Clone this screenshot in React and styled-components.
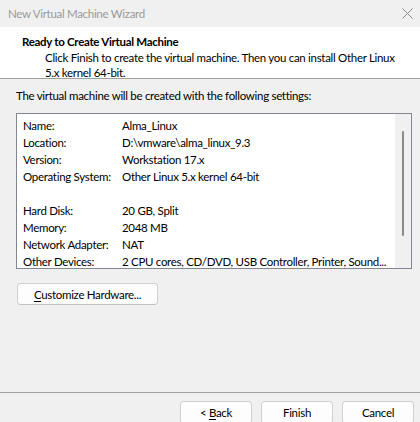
import styled, { createGlobalStyle } from 'styled-components';

const GlobalStyle = createGlobalStyle`
  html, body {
    margin: 0;
    padding: 0;
    background: #f0f0f0;
  }

  body {
    font-family: Lato, "Liberation Sans", sans-serif;
    font-size: 11.5px;
    letter-spacing: -0.3px;
    color: #000;
  }
`;

const Window = styled.div`
  width: 420px;
  height: 422px;
  display: flex;
  flex-direction: column;
  background: #f0f0f0;
  overflow: hidden;
`;

const TitleBar = styled.div`
  height: 27px;
  flex-shrink: 0;
  display: flex;
  align-items: center;
  justify-content: space-between;
  padding: 0 7px 0 8px;
  color: #9a9a9a;
`;

const Header = styled.div`
  height: 52px;
  flex-shrink: 0;
  background: #fff;
  border-bottom: 1px solid #a0a0a0;
  padding: 6px 0 0 22px;
  box-sizing: border-box;
  white-space: nowrap;

  h1 {
    margin: 0;
    font-size: 11.5px;
    font-weight: 700;
    line-height: 17px;
  }

  p {
    margin: 0 0 0 23px;
    line-height: 15px;
  }
`;

const Body = styled.div`
  flex: 1;
  display: flex;
  flex-direction: column;
  padding: 8px 8px 0 16px;
`;

const Intro = styled.div`
  line-height: 17px;
`;

const SettingsBox = styled.div`
  margin-top: 9px;
  width: 396px;
  height: 156px;
  box-sizing: border-box;
  border: 1px solid #828790;
  background: #fff;
  display: grid;
  grid-template-columns: 1fr 16px;
`;

const Rows = styled.div`
  padding: 3px 0 0 6px;
  overflow: hidden;
`;

const Row = styled.div`
  display: grid;
  grid-template-columns: 99px 1fr;
  height: 17px;
  line-height: 17px;
  white-space: nowrap;
`;

const ScrollTrack = styled.div`
  background: #f0f0f0;
  display: flex;
  justify-content: center;
  padding-top: 17px;
`;

const ScrollThumb = styled.div`
  width: 2px;
  height: 105px;
  background: #8a8a8a;
  border-radius: 1px;
`;

const Button = styled.button`
  flex-shrink: 0;
  height: ${({ $height }) => $height || 22}px;
  width: ${({ $width }) => $width || 72}px;
  padding: 0;
  box-sizing: border-box;
  border: 1px solid #d0d0d0;
  border-bottom-color: #c2c2c2;
  border-radius: 4px;
  background: #fdfdfd;
  font-family: inherit;
  font-size: 11.5px;
  letter-spacing: -0.3px;
  color: #000;

  u {
    text-decoration-thickness: 1px;
    text-underline-offset: 2px;
  }
`;

const CustomizeRow = styled.div`
  margin-top: 14px;
  padding-left: 1px;
`;

const Footer = styled.div`
  margin-top: auto;
  flex-shrink: 0;
  box-sizing: border-box;
  height: 30px;
  border-top: 1px solid #a0a0a0;
  display: flex;
  align-items: flex-start;
  justify-content: flex-end;
  gap: 9px;
  padding: 8px 6px 0 0;
  overflow: hidden;
`;

const settings = [
  ['Name:', 'Alma_Linux'],
  ['Location:', 'D:\\vmware\\alma_linux_9.3'],
  ['Version:', 'Workstation 17.x'],
  ['Operating System:', 'Other Linux 5.x kernel 64-bit'],
  ['', ''],
  ['Hard Disk:', '20 GB, Split'],
  ['Memory:', '2048 MB'],
  ['Network Adapter:', 'NAT'],
  ['Other Devices:', '2 CPU cores, CD/DVD, USB Controller, Printer, Sound...'],
];

export default function App() {
  return (
    <Window>
      <GlobalStyle />
      <TitleBar>
        <span>New Virtual Machine Wizard</span>
        <svg width="11" height="11" viewBox="0 0 11 11">
          <path d="M0.5 0.5 L10.5 10.5 M10.5 0.5 L0.5 10.5" stroke="#8a8a8a" strokeWidth="1" />
        </svg>
      </TitleBar>
      <Header>
        <h1>Ready to Create Virtual Machine</h1>
        <p>
          Click Finish to create the virtual machine. Then you can install Other Linux
          <br />
          5.x kernel 64-bit.
        </p>
      </Header>
      <Body>
        <Intro>The virtual machine will be created with the following settings:</Intro>
        <SettingsBox>
          <Rows>
            {settings.map(([label, value], i) => (
              <Row key={i}>
                <span>{label}</span>
                <span>{value}</span>
              </Row>
            ))}
          </Rows>
          <ScrollTrack>
            <ScrollThumb />
          </ScrollTrack>
        </SettingsBox>
        <CustomizeRow>
          <Button $width={141}><u>C</u>ustomize Hardware...</Button>
        </CustomizeRow>
      </Body>
      <Footer>
        <Button $height={23}>&lt; <u>B</u>ack</Button>
        <Button $height={23}>Finish</Button>
        <Button $height={23}>Cancel</Button>
      </Footer>
    </Window>
  );
}
